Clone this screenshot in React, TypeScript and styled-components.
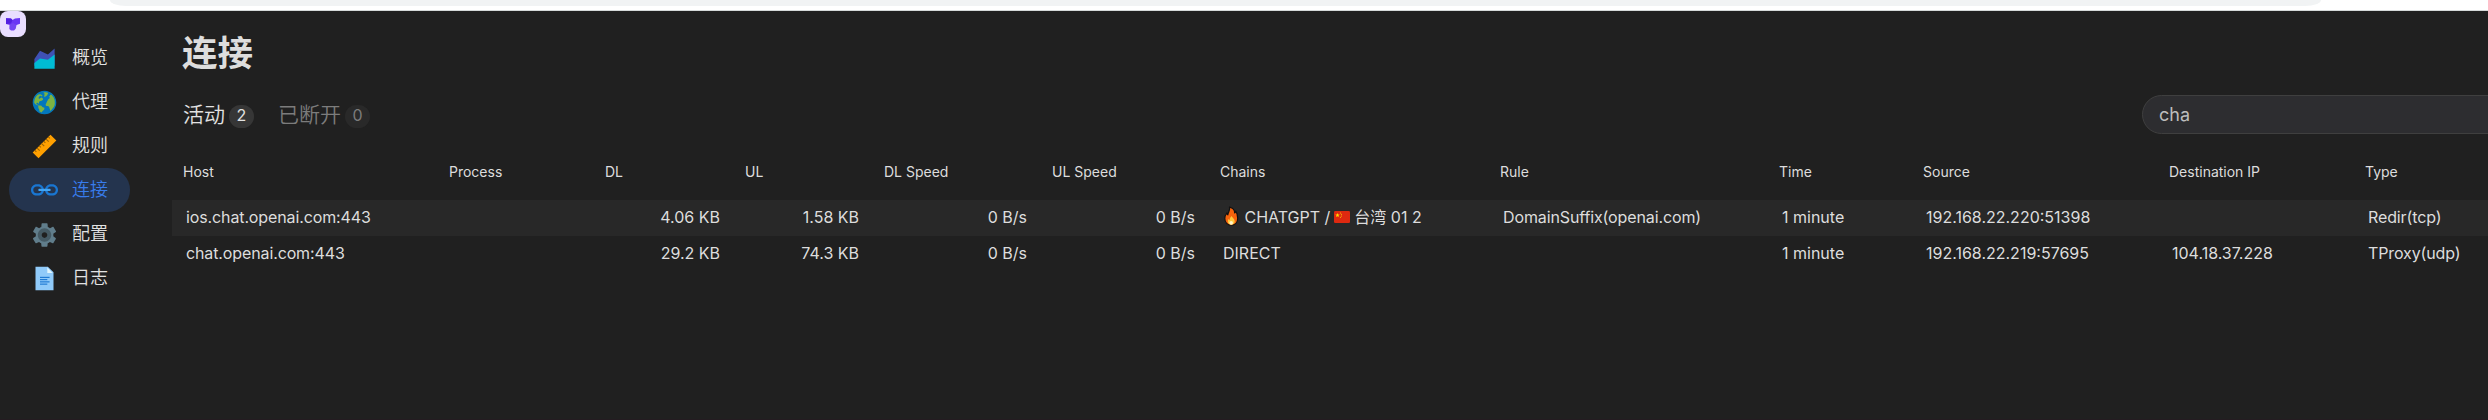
import React from "react";
import styled, { createGlobalStyle } from "styled-components";
import { FcAreaChart, FcGlobe, FcRuler, FcLink, FcSettings, FcDocument } from "react-icons/fc";

const sans = `Inter, "Noto Sans CJK SC", sans-serif`;

const GlobalStyle = createGlobalStyle`
  *, *::before, *::after { box-sizing: border-box; }
  html, body { margin: 0; height: 100%; overflow: hidden; background: #202020; }
  body { font-family: ${sans}; color: #ddd; }
`;

const Page = styled.div`
  display: flex;
  flex-direction: column;
  height: 420px;
  overflow: hidden;
  border-bottom: 1px solid #241c21;
`;

const BrowserBar = styled.div`
  flex: none;
  height: 11px;
  padding: 0 167px 0 110px;
  background: #fff;
  border-bottom: 1px solid #d5d9d9;
`;

const AddressBar = styled.div`
  height: 6px;
  border-radius: 0 0 16px 16px / 0 0 6px 6px;
  background: #f1f3f4;
`;

const Body = styled.div`
  flex: 1;
  display: flex;
  min-height: 0;
`;

const Sidebar = styled.aside`
  flex: none;
  width: 172px;
`;

const Logo = styled.div`
  width: 26px;
  height: 26px;
  border-radius: 8px;
  overflow: hidden;
  background: #e9deff;
  svg { display: block; }
`;

const Nav = styled.nav`
  display: flex;
  flex-direction: column;
  margin: -1px 0 0 9px;
`;

const NavItem = styled.a<{ $active?: boolean }>`
  display: flex;
  align-items: center;
  gap: 14px;
  width: 121px;
  height: 44px;
  padding-left: 22px;
  border-radius: 22px;
  font-size: 18px;
  line-height: 24px;
  font-weight: 350;
  background: ${(p) => (p.$active ? "#24344e" : "transparent")};
  color: ${(p) => (p.$active ? "#387cec" : "#e2e2e2")};
  svg { flex: none; width: 27px; height: 27px; }
`;

const Main = styled.main`
  flex: 1;
  min-width: 0;
  overflow: hidden;
`;

const Title = styled.h1`
  margin: 17px 0 0 10px;
  height: 52px;
  font-size: 35.5px;
  line-height: 52px;
  font-weight: 700;
`;

const Toolbar = styled.div`
  display: flex;
  align-items: center;
  height: 39px;
  margin: 15px 0 0 11px;
`;

const Tab = styled.div<{ $active?: boolean }>`
  display: flex;
  align-items: center;
  gap: 4px;
  margin-right: 24px;
  font-size: 21px;
  line-height: 30px;
  font-weight: 350;
  color: ${(p) => (p.$active ? "#e2e2e2" : "#7c7c7c")};
`;

const Count = styled.span<{ $active?: boolean }>`
  display: grid;
  place-items: center;
  width: 25px;
  height: 23px;
  margin-top: 3px;
  border-radius: 12px;
  font-size: 16px;
  line-height: 20px;
  font-weight: 400;
  padding-bottom: 2px;
  background: ${(p) => (p.$active ? "#363636" : "#292929")};
`;

const Search = styled.div`
  flex: none;
  width: 380px;
  height: 39px;
  margin-left: auto;
  margin-right: -34px;
  padding-left: 16px;
  border: 1px solid #3f3f3f;
  border-radius: 20px;
  background: #2d2d30;
  color: #bdbdbd;
  font-size: 18px;
  line-height: 37px;
`;

const columnTemplate = "266px 156px 140px 139px 168px 168px 280px 279px 144px 246px 196px 150px";

const Table = styled.div`
  margin-top: 16px;
  width: 2332px;
`;

const HeaderRow = styled.div`
  display: grid;
  grid-template-columns: ${columnTemplate};
  align-items: center;
  height: 50px;
  padding-bottom: 7px;
`;

const HeaderCell = styled.div`
  padding-left: 11px;
  font-size: 14px;
  line-height: 20px;
`;

const Row = styled.div<{ $striped?: boolean }>`
  display: grid;
  grid-template-columns: ${columnTemplate};
  align-items: center;
  height: 36px;
  padding-bottom: 2px;
  background: ${(p) => (p.$striped ? "#282828" : "transparent")};
`;

const Cell = styled.div<{ $right?: boolean; $tight?: boolean }>`
  padding: 0 14px;
  text-align: ${(p) => (p.$right ? "right" : "left")};
  letter-spacing: ${(p) => (p.$tight ? "-0.12px" : "normal")};
  font-size: 16px;
  line-height: 24px;
  height: 24px;
  white-space: pre;
`;

const FlameIcon = styled.svg`
  vertical-align: -3px;
`;

const FlagIcon = styled.svg`
  margin: 0 0 0 -1px;
  vertical-align: 0;
`;

const LogoMark = () => (
  <svg width="26" height="26" viewBox="0 0 26 26">
    <path d="M6 7.200l5 .3 1.500 1.500L15 7.500l5-.5v5.800l-3.500 1.200H10L6 13z" fill="#6a35f4" />
    <path d="M6 7.200l5 .3 1.500 1.500-1.500 3.500L6 13z" fill="#5320e0" />
    <path d="M9.500 14l3.500-2 3.500 2-.8 3.800-1.700 1.700h-3l-1.700-1.500z" fill="#7444f2" />
  </svg>
);

const Flame = () => (
  <FlameIcon width="17" height="20" viewBox="2 0 17 20">
    <path d="M8.500 1c4 1.200 5.200 3.500 5.200 6 .6-.4.900-1 1-1.800 1.500 2 2 4.500 2 7 0 4-2.500 7-6.400 7S3.800 16.500 3.800 12.500c0-2.500 1-4.200 2-5.500.2.900.5 1.500 1 1.900C7 6 9.500 4.500 8.500 1z" fill="#f7630c" stroke="#111" strokeWidth="1.200" strokeLinejoin="round" />
    <path d="M10.500 10c.5 1.500 3.200 2.800 3.200 5.200 0 2.100-1.500 3.500-3.400 3.500s-3.500-1.400-3.500-3.500c0-.9.3-1.600.8-2.200.4.600.7.800 1 .9.200-1.600.8-2.600 1.900-3.900z" fill="#ffc83d" />
    <ellipse cx="10.200" cy="16.800" rx="1.800" ry="1.900" fill="#fff5c8" />
  </FlameIcon>
);

const Flag = () => (
  <FlagIcon width="16" height="12" viewBox="0 0 16 12">
    <rect width="16" height="12" rx="1.200" fill="#de2910" />
    <path d="M3.500 2l.6 1.500 1.600.1-1.200 1 .4 1.500-1.400-.8-1.400.8.400-1.500-1.200-1 1.600-.1z" fill="#ffde00" />
    <circle cx="6.500" cy="2" r=".5" fill="#ffde00" />
    <circle cx="7.400" cy="3.300" r=".5" fill="#ffde00" />
    <circle cx="7.400" cy="5" r=".5" fill="#ffde00" />
    <circle cx="6.400" cy="6.300" r=".5" fill="#ffde00" />
  </FlagIcon>
);

const navItems = [
  { label: "概览", Icon: FcAreaChart },
  { label: "代理", Icon: FcGlobe },
  { label: "规则", Icon: FcRuler },
  { label: "连接", Icon: FcLink, active: true },
  { label: "配置", Icon: FcSettings },
  { label: "日志", Icon: FcDocument },
];

const columns = [
  { name: "Host", tight: true },
  { name: "Process" },
  { name: "DL", right: true },
  { name: "UL", right: true },
  { name: "DL Speed", right: true },
  { name: "UL Speed", right: true },
  { name: "Chains" },
  { name: "Rule", tight: true },
  { name: "Time" },
  { name: "Source" },
  { name: "Destination IP" },
  { name: "Type", tight: true },
];

const rows: React.ReactNode[][] = [
  ["ios.chat.openai.com:443", "", "4.06 KB", "1.58 KB", "0 B/s", "0 B/s", <><Flame /> CHATGPT / <Flag /> 台湾 01 2</>, "DomainSuffix(openai.com)", "1 minute", "192.168.22.220:51398", "", "Redir(tcp)"],
  ["chat.openai.com:443", "", "29.2 KB", "74.3 KB", "0 B/s", "0 B/s", "DIRECT", "", "1 minute", "192.168.22.219:57695", "104.18.37.228", "TProxy(udp)"],
];

export default function App() {
  return (
    <Page>
      <GlobalStyle />
      <BrowserBar><AddressBar /></BrowserBar>
      <Body>
        <Sidebar>
          <Logo><LogoMark /></Logo>
          <Nav>
            {navItems.map(({ label, Icon, active }) => (
              <NavItem key={label} $active={active}><Icon />{label}</NavItem>
            ))}
          </Nav>
        </Sidebar>
        <Main>
          <Title>连接</Title>
          <Toolbar>
            <Tab $active>活动<Count $active>2</Count></Tab>
            <Tab>已断开<Count>0</Count></Tab>
            <Search>cha</Search>
          </Toolbar>
          <Table>
            <HeaderRow>
              {columns.map((c) => <HeaderCell key={c.name}>{c.name}</HeaderCell>)}
            </HeaderRow>
            {rows.map((cells, i) => (
              <Row key={i} $striped={i % 2 === 0}>
                {cells.map((cell, j) => (
                  <Cell key={j} $right={columns[j].right} $tight={columns[j].tight}>{cell}</Cell>
                ))}
              </Row>
            ))}
          </Table>
        </Main>
      </Body>
    </Page>
  );
}
